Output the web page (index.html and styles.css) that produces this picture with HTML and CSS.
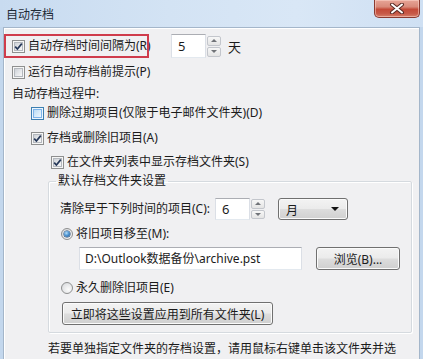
FILE: index.html
```html
<!DOCTYPE html>
<html lang="zh-CN">
<head>
<meta charset="utf-8">
<title>自动存档</title>
<link rel="stylesheet" href="styles.css">
</head>
<body>
<div class="window">
  <div class="titlebar">
    <span class="title">自动存档</span>
    <span class="close" aria-label="关闭">
      <svg width="16" height="11" viewBox="0 0 16 11"><path d="M3 1.5 L13 9.5 M13 1.5 L3 9.5" stroke="#5a2a24" stroke-width="4" stroke-linecap="round"/><path d="M3 1.5 L13 9.5 M13 1.5 L3 9.5" stroke="#ffffff" stroke-width="2" stroke-linecap="round"/></svg>
    </span>
  </div>
  <div class="frame">
    <div class="content">
      <div class="row row-1">
        <span class="cb checked"><svg class="tick" width="9" height="9" viewBox="0 0 9 9"><path d="M1.2 4.6 L3.4 7 L7.8 1.6" fill="none" stroke="#263859" stroke-width="1.7"/></svg></span>
        <span class="lbl lbl-interval">自动存档时间间隔为(R)</span>
        <span class="textbox num">5</span>
        <span class="spin"><span class="spin-btn"><i class="up"></i></span><span class="spin-btn"><i class="down"></i></span></span>
        <span class="unit">天</span>
        <span class="highlight"></span>
      </div>
      <div class="row row-2">
        <span class="cb"></span>
        <span class="lbl">运行自动存档前提示(P)</span>
      </div>
      <div class="row row-3">
        <span class="lbl">自动存档过程中:</span>
      </div>
      <div class="row row-4 ind-1">
        <span class="cb hot"></span>
        <span class="lbl">删除过期项目(仅限于电子邮件文件夹)(D)</span>
      </div>
      <div class="row row-5 ind-1">
        <span class="cb checked"><svg class="tick" width="9" height="9" viewBox="0 0 9 9"><path d="M1.2 4.6 L3.4 7 L7.8 1.6" fill="none" stroke="#263859" stroke-width="1.7"/></svg></span>
        <span class="lbl">存档或删除旧项目(A)</span>
      </div>
      <div class="row row-6 ind-2">
        <span class="cb checked"><svg class="tick" width="9" height="9" viewBox="0 0 9 9"><path d="M1.2 4.6 L3.4 7 L7.8 1.6" fill="none" stroke="#263859" stroke-width="1.7"/></svg></span>
        <span class="lbl">在文件夹列表中显示存档文件夹(S)</span>
      </div>

      <fieldset class="group">
        <legend>默认存档文件夹设置</legend>
        <div class="row g-row-1">
          <span class="lbl lbl-clear">清除早于下列时间的项目(C):</span>
          <span class="textbox num small">6</span>
          <span class="spin small"><span class="spin-btn"><i class="up"></i></span><span class="spin-btn"><i class="down"></i></span></span>
          <span class="combo"><span>月</span><i class="combo-arrow"></i></span>
        </div>
        <div class="row g-row-2">
          <span class="radio on"></span>
          <span class="lbl">将旧项目移至(M):</span>
        </div>
        <div class="row g-row-3">
          <span class="textbox path">D:\Outlook数据备份\archive.pst</span>
          <span class="btn browse">浏览(B)...</span>
        </div>
        <div class="row g-row-4">
          <span class="radio"></span>
          <span class="lbl">永久删除旧项目(E)</span>
        </div>
        <div class="row g-row-5">
          <span class="btn apply">立即将这些设置应用到所有文件夹(L)</span>
        </div>
      </fieldset>

      <p class="note">若要单独指定文件夹的存档设置，请用鼠标右键单击该文件夹并选择“属性”，然后转到“自动存档”选项卡。</p>
    </div>
  </div>
</div>
</body>
</html>
```

FILE: styles.css
```css
html, body {
  margin: 0;
  padding: 0;
}

body {
  width: 423px;
  height: 359px;
  overflow: hidden;
  background: #c3d7ed;
  font-family: "Noto Sans", "Noto Sans CJK SC", sans-serif;
  font-size: 12px;
  color: #1b1b1b;
}

.window {
  width: 423px;
  height: 359px;
  display: flex;
  flex-direction: column;
}

.titlebar {
  height: 27px;
  flex: none;
  display: flex;
  align-items: flex-start;
  background: linear-gradient(to right, #c8dbf0 0%, #d3e3f4 40%, #d9e7f6 70%, #cfe0f3 100%);
}

.title {
  padding-left: 6px;
  line-height: 27px;
  font-family: "Noto Sans CJK SC", sans-serif;
  font-size: 12px;
  color: #1e2a36;
}

.close {
  margin-left: auto;
  margin-right: 3px;
  width: 46px;
  height: 18px;
  box-sizing: border-box;
  border: 1px solid #8a3a30;
  border-top: none;
  border-radius: 0 0 5px 5px;
  background: linear-gradient(to bottom, #e7a597 0%, #d98a7a 40%, #c44a38 55%, #c75a48 80%, #d67f6a 100%);
  box-shadow: inset 0 0 0 1px rgba(255, 220, 210, 0.5);
  display: flex;
  align-items: center;
  justify-content: center;
}

.frame {
  flex: 1;
  padding: 0 3px;
  display: flex;
}

.content {
  flex: 1;
  border: 1px solid #a4b6ca;
  border-bottom: none;
  background: #f0f0f2;
  padding-top: 6px;
  box-shadow: inset 1px 1px 0 #ffffff;
}

.row {
  display: flex;
  align-items: center;
  height: 20px;
  padding-left: 8px;
  position: relative;
}

.ind-1 { padding-left: 27px; }
.ind-2 { padding-left: 47px; }

.row-1 { height: 24px; }
.row-2 { margin-top: 4px; }
.row-3 { margin-top: 2px; }
.row-4 { margin-top: -1px; }
.row-5 { margin-top: 5px; }
.row-6 { margin-top: 4px; }

.lbl {
  white-space: nowrap;
  line-height: 20px;
}

.lbl-interval {
  width: 143px;
  flex: none;
}

.highlight {
  position: absolute;
  left: 0;
  top: 0;
  width: 145px;
  height: 24px;
  box-sizing: border-box;
  border: 2px solid #cf3c4c;
}

/* checkbox */
.cb {
  flex: none;
  width: 13px;
  height: 13px;
  box-sizing: border-box;
  border: 1px solid #8e8f8f;
  background: #f6f6f6;
  position: relative;
  margin-right: 3px;
}

.cb::before {
  content: "";
  position: absolute;
  left: 1px;
  top: 1px;
  width: 9px;
  height: 9px;
  box-sizing: border-box;
  border: 1px solid #b4b8be;
  background: linear-gradient(135deg, #cdd1d7 0%, #e6e8eb 55%, #f8f8f8 100%);
}

.cb.hot {
  border-color: #3c7fb1;
  background: #ecf6fd;
}

.cb.hot::before {
  border-color: #7eb4ea;
  background: linear-gradient(135deg, #b9dcf5 0%, #d8ecfa 55%, #eef7fd 100%);
}

.tick {
  position: absolute;
  left: 1px;
  top: 1px;
}

/* radio */
.radio {
  flex: none;
  width: 12px;
  height: 12px;
  box-sizing: border-box;
  border: 1px solid #8e8f8f;
  border-radius: 50%;
  background: radial-gradient(circle at 65% 65%, #fbfbfb 0%, #e4e5e7 60%, #cfd2d6 100%);
  margin-left: 1px;
  margin-right: 3px;
  position: relative;
}

.radio.on::after {
  content: "";
  position: absolute;
  left: 2px;
  top: 2px;
  width: 6px;
  height: 6px;
  border-radius: 50%;
  background: radial-gradient(circle at 40% 35%, #b7def8 0%, #4f95d2 45%, #184d87 100%);
  box-shadow: 0 0 0 0.5px #1d3f66;
}

/* textboxes */
.textbox {
  flex: none;
  box-sizing: border-box;
  background: #ffffff;
  border: 1px solid #abadb3;
  border-left-color: #dbdfe6;
  border-right-color: #dbdfe6;
  border-bottom-color: #e3e9ef;
  white-space: nowrap;
  display: flex;
  align-items: center;
}

.num {
  width: 35px;
  height: 24px;
  padding-left: 6px;
  font-size: 13px;
}

.num.small {
  height: 22px;
}

.spin {
  flex: none;
  width: 14px;
  height: 21px;
  margin-left: 1px;
  display: flex;
  flex-direction: column;
  gap: 1px;
}

.spin.small {
  height: 20px;
}

.spin-btn {
  flex: 1;
  box-sizing: border-box;
  border: 1px solid #c3c6cc;
  border-radius: 2px;
  background: linear-gradient(to bottom, #f7f7f7, #e4e4e4);
  display: flex;
  align-items: center;
  justify-content: center;
}

.spin-btn i {
  width: 0;
  height: 0;
  border-left: 3px solid transparent;
  border-right: 3px solid transparent;
}

.spin-btn .up { border-bottom: 3px solid #707378; }
.spin-btn .down { border-top: 3px solid #707378; }

.unit {
  margin-left: 7px;
  font-family: "Noto Sans CJK SC", sans-serif;
  font-size: 13px;
}

/* group box */
.group {
  margin: 1px 7px 0 44px;
  padding: 0 11px 7px 11px;
  border: 1px solid #d5dadf;
  border-radius: 2px;
  box-shadow: inset 1px 1px 0 #ffffff, 1px 1px 0 #ffffff;
  min-width: 0;
}

.group legend {
  padding: 0 2px;
  margin-left: -4px;
  line-height: 16px;
  white-space: nowrap;
}

.group .row {
  padding-left: 0;
}

.g-row-1 { height: 22px; margin-top: 9px; }
.g-row-2 { margin-top: 4px; }
.g-row-3 { height: 24px; margin-top: 2px; }
.g-row-4 { margin-top: 8px; }
.g-row-5 { height: 23px; margin-top: 4px; }

.lbl-clear {
  width: 155px;
  flex: none;
}

.combo {
  flex: none;
  width: 70px;
  height: 22px;
  margin-left: 13px;
  box-sizing: border-box;
  border: 1px solid #707070;
  border-radius: 3px;
  background: linear-gradient(to bottom, #f3f3f3 0%, #ebebeb 48%, #dddddd 52%, #d0d0d0 100%);
  box-shadow: inset 0 0 0 1px #fbfbfb;
  display: flex;
  align-items: center;
  padding: 0 8px 0 7px;
  font-family: "Noto Sans CJK SC", sans-serif;
}

.combo-arrow {
  margin-left: auto;
  width: 0;
  height: 0;
  border-left: 4px solid transparent;
  border-right: 4px solid transparent;
  border-top: 4px solid #111111;
}

.path {
  width: 223px;
  height: 23px;
  margin-left: 19px;
  padding-left: 5px;
}

.btn {
  flex: none;
  height: 23px;
  box-sizing: border-box;
  border: 1px solid #707070;
  border-radius: 3px;
  background: linear-gradient(to bottom, #f3f3f3 0%, #ebebeb 48%, #dddddd 52%, #cfcfcf 100%);
  box-shadow: inset 0 0 0 1px #fbfbfb;
  display: flex;
  align-items: center;
  justify-content: center;
  white-space: nowrap;
}

.browse {
  width: 84px;
  margin-left: 14px;
  margin-top: 1px;
}

.apply {
  width: 211px;
  margin-left: 2px;
}

.note {
  margin: 7px 12px 0 44px;
  line-height: 17px;
  font-size: 12px;
}
```
